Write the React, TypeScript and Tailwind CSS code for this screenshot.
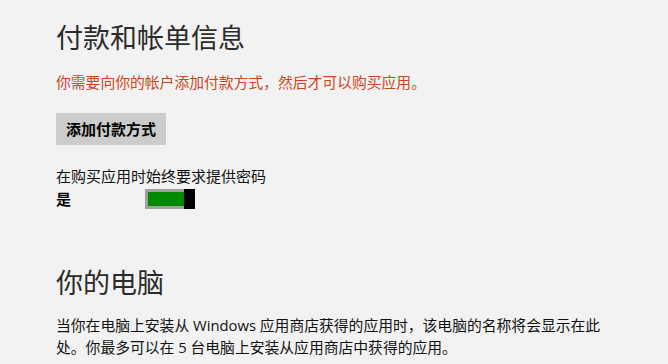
export default function App() {
  return (
    <div
      className="w-[668px] h-[364px] overflow-hidden bg-[#f2f2f2] pl-[56px] pt-[22px]"
      style={{ fontFamily: '"Segoe UI", "Open Sans", "Noto Sans CJK SC", sans-serif' }}
    >
      <h1 className="text-[27px] leading-[32px] text-[#2b2b2b] font-normal">付款和帐单信息</h1>
      <p className="mt-[18px] text-[14.8px] leading-[20px] text-[#cc461a]">
        你需要向你的帐户添加付款方式，然后才可以购买应用。
      </p>
      <button className="mt-[21px] h-[32px] px-[10px] bg-[#cccccc] text-[15px] font-bold text-black">
        添加付款方式
      </button>
      <div className="mt-[21px] text-[15px] leading-[20px] text-[#111]">在购买应用时始终要求提供密码</div>
      <div className="mt-[3px] flex items-center h-[20px]">
        <span className="w-[89px] text-[15px] font-bold text-black">是</span>
        <div className="flex h-[20px] w-[50px] bg-[#a0a0a0]">
          <div className="flex-1 m-[3px] mr-0 bg-[#008a00]" />
          <div className="w-[11px] bg-black" />
        </div>
      </div>
      <h1 className="mt-[58px] text-[27px] leading-[32px] text-[#2b2b2b] font-normal">你的电脑</h1>
      <p className="mt-[15px] w-[562px] text-[14.8px] leading-[22px] text-[#111]">
        当你在电脑上安装从 Windows 应用商店获得的应用时，该电脑的名称将会显示在此处。你最多可以在 5 台电脑上安装从应用商店中获得的应用。
      </p>
    </div>
  );
}
